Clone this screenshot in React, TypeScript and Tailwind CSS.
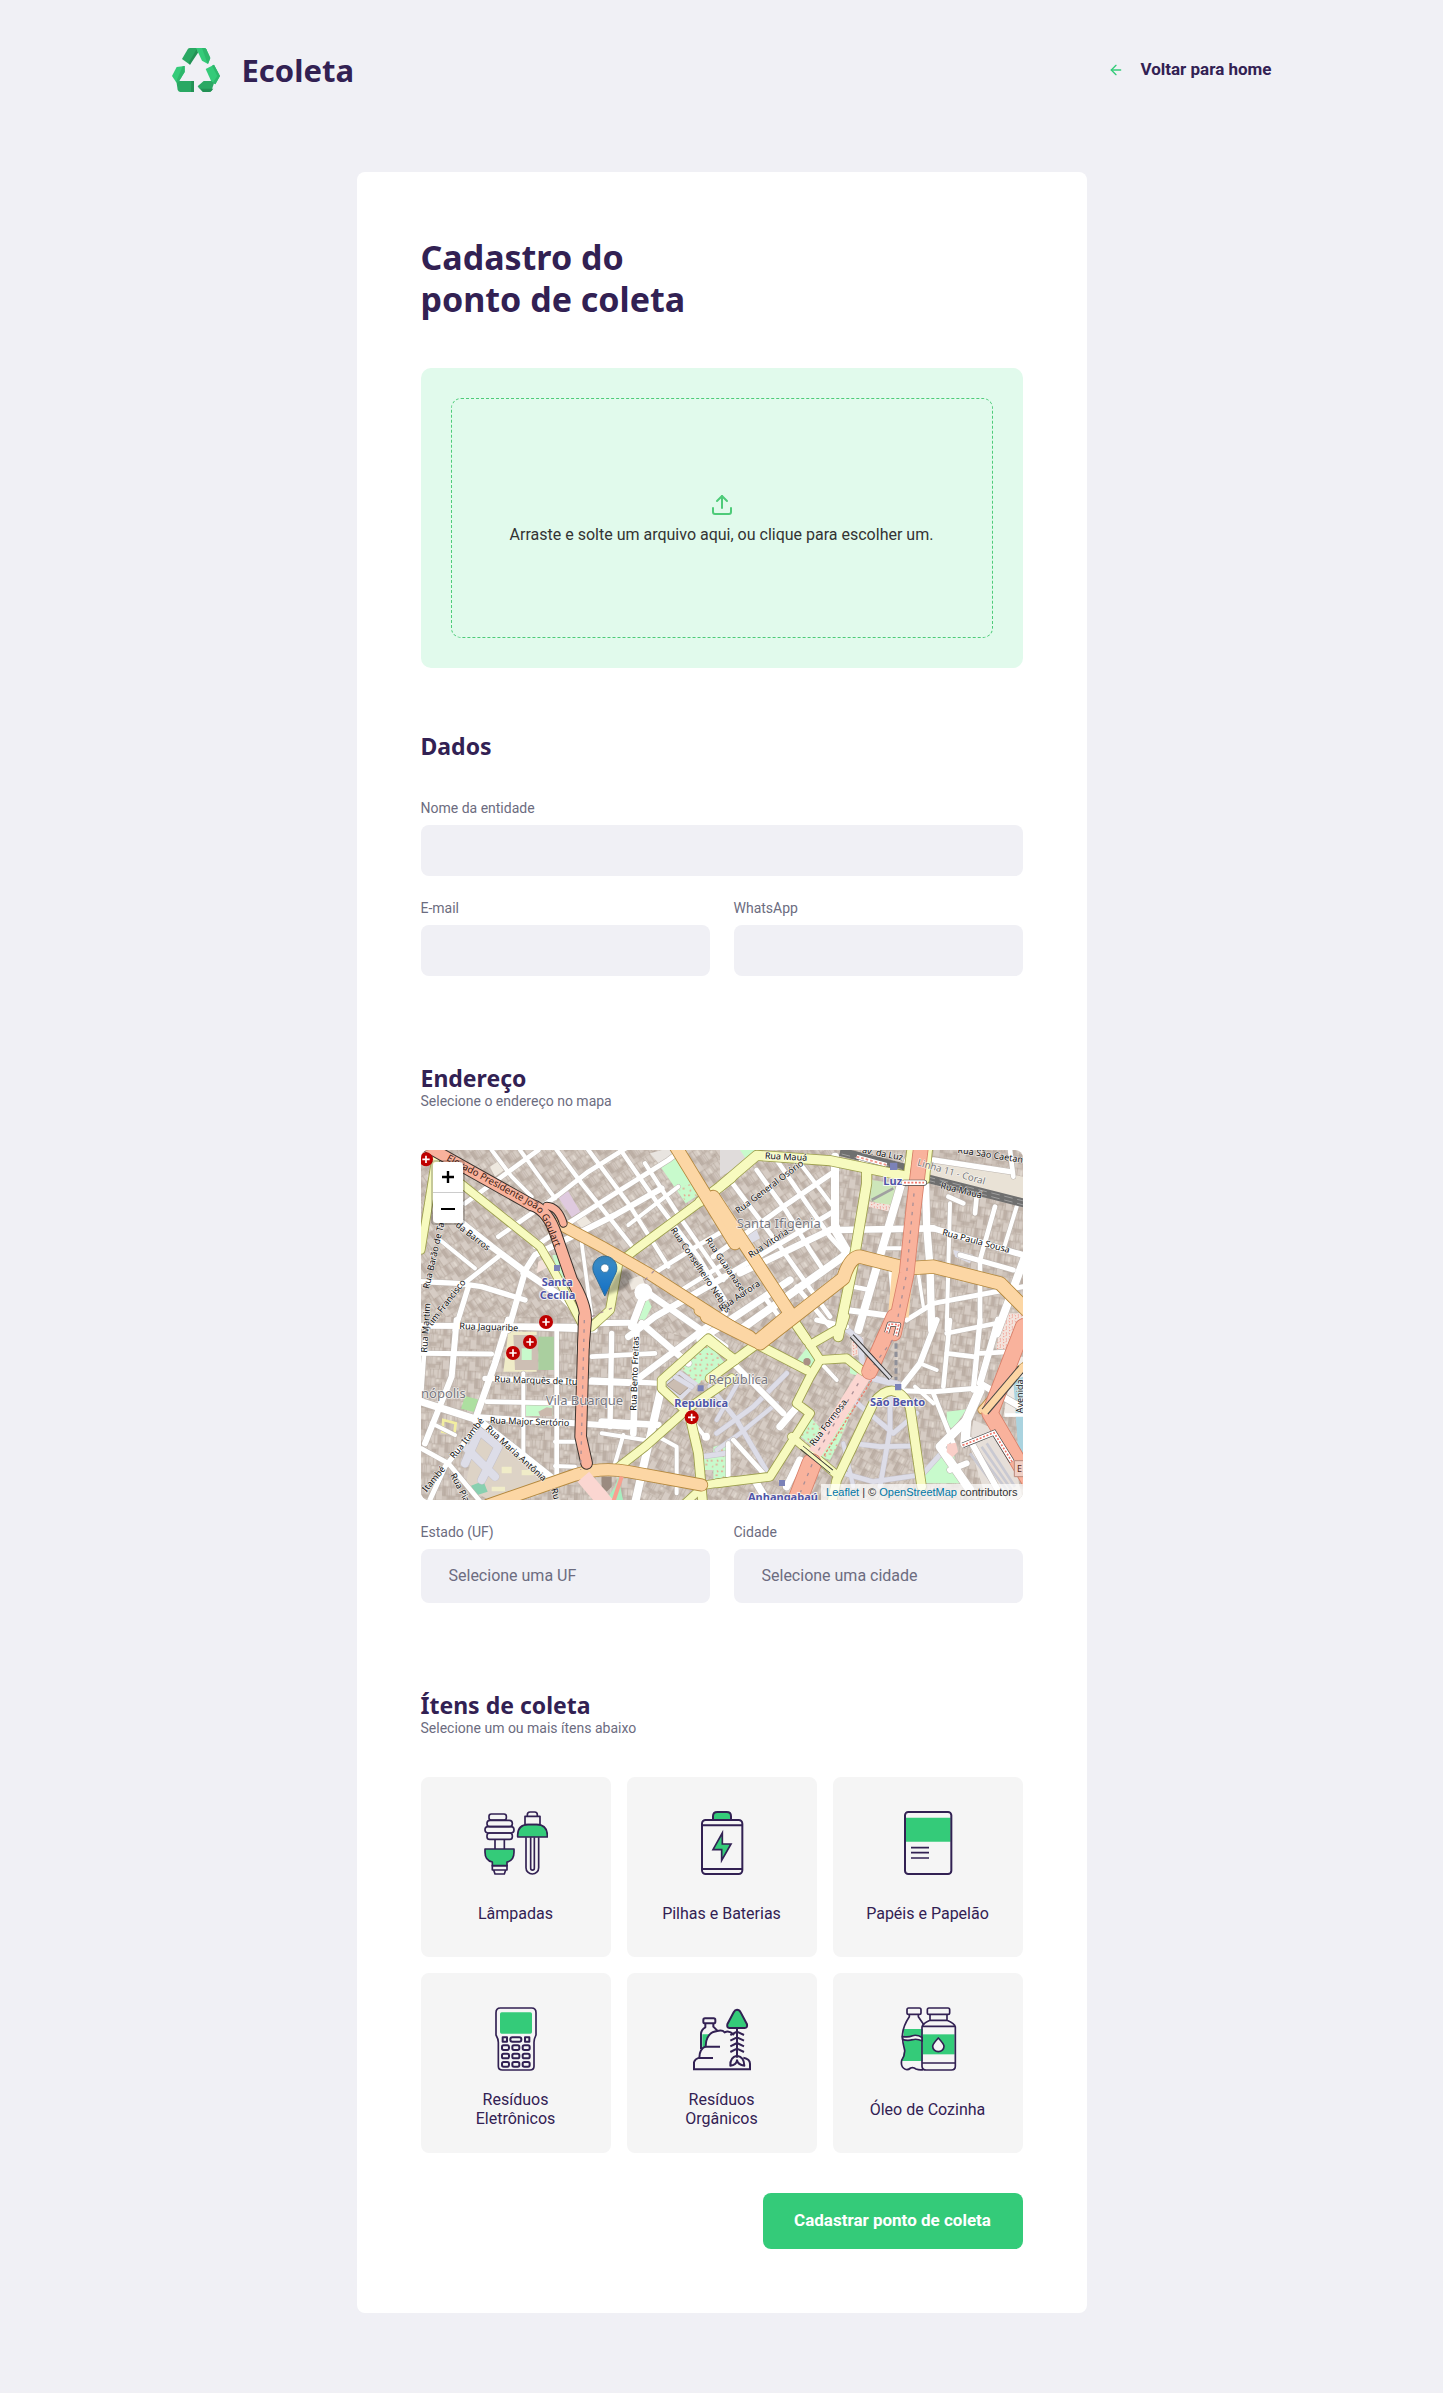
import { useState, type ReactNode } from "react";
import { FiArrowLeft, FiUpload } from "react-icons/fi";

const GREEN = "#34CB79";
const INK = "#322153";

/* ---------- Logo ---------- */

function Logo() {
  return (
    <a href="#" className="flex items-center gap-[22px]" aria-label="Ecoleta">
      <svg viewBox="0 0 144 132" className="h-11 w-12" aria-hidden="true">
        <path d="M30 33 48 2Q50 0 54 0H78L54 50Z" fill="#2AA863" />
        <path d="M54 50 78 14 76 0 50 44Z" fill="#239155" />
        <path d="M72 0H97Q101 0 103 4L115 30 108 48 90 38Z" fill={GREEN} />
        <path d="M90 0H97Q101 0 103 4L115 30 108 48 104 40Z" fill="#2EB76C" />
        <path d="M0 84 14 57 38 54 38 72 16 108Z" fill={GREEN} />
        <path d="M32 55 38 54 38 72 16 108 13 100Z" fill="#2EB76C" />
        <path d="M14 106 22 99H66V132H25Q20 132 17 126Z" fill="#2AA863" />
        <path d="M58 99H66V132H57Z" fill="#239155" />
        <path d="M77 115 95 99 128 99 119 127Q117 132 110 132H93Z" fill="#2AA863" />
        <path d="M77 115 82 122 124 122 119 128Q117 132 110 132H93Z" fill="#239155" />
        <path d="M101 63 126 50 144 84 130 109 117 98Z" fill={GREEN} />
        <path d="M120 53 126 50 144 84 130 109 122 104 136 84Z" fill="#2EB76C" />
      </svg>
      <span className="font-['Noto_Sans',sans-serif] text-[31px] leading-10 font-bold text-[#322153]">Ecoleta</span>
    </a>
  );
}

/* ---------- Map ---------- */

type Quadrant = 0 | 1 | 2 | 3;
type Road = [Quadrant, number, string];

const OFFSETS = ["translate(-18 -30)", "translate(897 -30)", "translate(-18 510)", "translate(897 510)"];

const whiteRoads: Road[] = [
  [0, 14, "M150 190 370 30"],
  [0, 14, "M250 290 430 165 520 95 640 20"],
  [0, 15, "M360 320 460 250 585 170 760 60 800 30"],
  [0, 18, "M325 400 360 345 600 225 740 145"],
  [0, 12, "M640 255 790 140"],
  [0, 12, "M230 30 290 110 350 170"],
  [0, 12, "M315 30 420 175"],
  [0, 13, "M425 30 500 130 585 235 660 330"],
  [0, 13, "M520 30 640 190 760 380"],
  [0, 13, "M610 20 735 200 850 350 930 480"],
  [0, 13, "M690 70 800 240 925 420"],
  [0, 20, "M130 240 230 320 330 395 440 470 500 530"],
  [0, 12, "M75 300 180 385"],
  [0, 14, "M250 350 135 440"],
  [0, 16, "M18 425 130 430 200 440 330 480"],
  [0, 18, "M330 395 280 570"],
  [0, 16, "M160 440 120 570"],
  [0, 18, "M18 557 480 560"],
  [0, 11, "M500 310 530 530"],
  [0, 18, "M530 550 640 548"],
  [0, 22, "M690 455 650 560"],
  [0, 20, "M700 460 930 620"],
  [0, 20, "M640 590 720 530 930 410"],
  [0, 14, "M700 410 860 310 930 270"],
  [0, 14, "M800 450 930 370"],
  [1, 14, "M30 120 180 320 330 530"],
  [1, 14, "M110 90 200 215 270 330 310 390"],
  [1, 14, "M170 60 260 190 330 290 380 345"],
  [1, 12, "M240 70 340 200"],
  [1, 16, "M-20 350 190 200 350 90"],
  [1, 16, "M-20 430 340 215"],
  [1, 20, "M60 400 350 260"],
  [1, 24, "M60 570 390 335"],
  [1, 22, "M-60 600 210 420"],
  [1, 24, "M345 50 345 270 380 330"],
  [1, 24, "M565 60 500 280 415 570"],
  [1, 20, "M350 270 640 265"],
  [1, 22, "M615 60 620 260 630 380 635 570"],
  [1, 18, "M640 265 909 345"],
  [1, 16, "M640 60 870 95"],
  [1, 12, "M690 190 680 570"],
  [1, 14, "M825 200 780 360 780 560"],
  [1, 12, "M890 200 850 330"],
  [1, 14, "M870 30 880 110"],
  [1, 15, "M909 440 640 490 560 540"],
  [1, 24, "M915 350 830 580"],
  [1, 15, "M720 345 880 390"],
  [1, 12, "M500 325 545 325"],
  [1, 14, "M400 440 450 450"],
  [1, 18, "M380 510 530 530"],
  [1, 10, "M595 400 610 500"],
  [1, 10, "M510 390 520 500"],
  [1, 14, "M230 440 330 560"],
  [1, 14, "M140 480 200 560"],
  [1, 14, "M770 170 765 220M685 170 730 190"],
  [2, 15, "M18 100 230 102"],
  [2, 18, "M125 0 110 170 30 370"],
  [2, 20, "M280 0 240 130 180 300"],
  [2, 22, "M18 245 190 300 430 490"],
  [2, 14, "M30 60 18 230"],
  [2, 16, "M260 20 540 30"],
  [2, 16, "M210 175 640 190"],
  [2, 14, "M215 245 480 250"],
  [2, 18, "M190 292 480 310 640 320"],
  [2, 12, "M325 160 325 400"],
  [2, 14, "M425 30 425 490"],
  [2, 12, "M420 365 480 365M420 438 480 440"],
  [2, 16, "M590 40 585 320"],
  [2, 20, "M665 20 655 340"],
  [2, 14, "M530 110 720 100"],
  [2, 16, "M530 180 740 190"],
  [2, 20, "M560 305 730 315"],
  [2, 12, "M560 340 690 360"],
  [2, 24, "M740 200 660 550"],
  [2, 12, "M625 345 600 430"],
  [2, 14, "M18 385 100 430 200 550"],
  [2, 15, "M195 310 90 440 40 550"],
  [2, 12, "M50 310 120 345"],
  [2, 20, "M680 10 820 130"],
  [2, 20, "M930 -20 670 175"],
  [2, 12, "M830 300 870 350"],
  [2, 12, "M720 345 785 380 785 520"],
  [3, 18, "M-30 60 190 280"],
  [3, 15, "M290 0 380 20"],
  [3, 12, "M290 115 350 180"],
  [3, 22, "M180 320 240 250"],
  [3, 14, "M40 360 130 460M25 370 25 470"],
  [3, 18, "M650 0 600 130 530 220"],
  [3, 14, "M690 0 670 200"],
  [3, 16, "M780 0 760 210"],
  [3, 20, "M835 0 780 190 900 260"],
  [3, 12, "M600 130 650 150"],
  [3, 14, "M680 40 830 10M680 100 760 110M780 100 880 95"],
  [3, 15, "M540 212 640 215 770 205"],
  [3, 12, "M585 200 640 250"],
  [3, 14, "M640 220 700 370"],
  [3, 28, "M780 210 740 300 735 370"],
  [3, 26, "M740 300 660 380 750 510"],
  [3, 18, "M690 450 740 430M750 360 850 540"],
  [3, 22, "M240 420 200 500M110 490 140 540"],
];

const footways: Road[] = [
  [3, 14, "M200 160 100 260-10 340"],
  [3, 14, "M-30 200 50 300 150 470"],
  [3, 12, "M70 160-10 300"],
  [3, 12, "M-10 390 60 340 170 250"],
  [3, 14, "M400 240 520 340 590 280"],
  [3, 14, "M400 370 480 380 580 378"],
  [3, 14, "M370 460 460 485 600 465"],
  [3, 14, "M510 210 510 330 480 500"],
  [3, 14, "M420 170 380 260 330 330"],
  [3, 16, "M370 20 420 60 430 160"],
  [3, 18, "M420 165 540 195"],
  [3, 14, "M610 460 690 370"],
  [3, 12, "M370 370 400 500"],
  [2, 14, "M780 170 830 200M860 410 930 400"],
  [2, 24, "M190 330 250 380 200 480M150 380 240 470M190 340 150 430"],
];

const yellowRoads: Road[] = [
  [0, 22, "M62 60 18 330"],
  [0, 22, "M100 100 375 320 410 380 500 550"],
  [0, 24, "M530 560 585 510 610 370 660 330 870 175 950 115"],
  [1, 28, "M-60 185 0 140 110 46 330 62 575 112"],
  [1, 28, "M440 90 440 130 400 370 355 590"],
  [1, 18, "M572 20 560 110M628 20 618 120"],
  [1, 26, "M205 520 260 600"],
  [2, 24, "M600 450 690 380 820 265 950 175"],
  [2, 24, "M810 270 740 205 740 180 880 55 930 95"],
  [2, 26, "M820 270 850 400 865 570"],
  [2, 22, "M810 550 870 495 950 483"],
  [3, 26, "M-30 175 110 72 260 150"],
  [3, 26, "M-30 65 45 120"],
  [3, 24, "M215-10 300 120 270 170 230 250 270 280 150 470-10 490"],
  [3, 24, "M375-10 365 20 270 75"],
  [3, 24, "M300 120 380 115 430 155"],
  [3, 22, "M215 350 345 460"],
  [3, 26, "M335 550 350 480 460 250Q520 170 570 260L605 500"],
];

const orangeRoads: Road[] = [
  [0, 32, "M430 250 560 320 700 400 950 560"],
  [0, 36, "M770 0 960 310"],
  [1, 36, "M-20 170 210 520"],
  [1, 38, "M120 610 370 415Q390 350 420 350L560 385 640 380 840 430 920 510"],
  [1, 34, "M-60 510 90 590"],
  [2, 34, "M220 555 480 465Q560 440 640 455L860 495"],
  [3, 36, "M-40-10 110 65 200-10"],
  [3, 20, "M785 270 870 170 925 130"],
];

const redRoads: Road[] = [
  [1, 42, "M603 20 580 210 560 400 522 580"],
  [3, 44, "M522-10 448 155"],
  [3, 56, "M275 430 225 560"],
  [3, 46, "M910 20 810 280 950 520"],
];

const elevated: Road[] = [
  [0, 20, "M395 198Q430 200 445 250"],
  [0, 32, "M20 10 350 195Q400 210 425 290L470 420Q512 490 512 540L505 620"],
  [2, 32, "M508-10 497 350 515 430"],
];

function Roads({ roads, fill, casing, edge = 5 }: { roads: Road[]; fill: string; casing: string; edge?: number }) {
  return (
    <g fill="none" strokeLinejoin="round" strokeLinecap="round">
      {roads.map(([q, w, d], i) => (
        <path key={`c${i}`} d={d} transform={OFFSETS[q]} stroke={casing} strokeWidth={w + edge} />
      ))}
      {roads.map(([q, w, d], i) => (
        <path key={`f${i}`} d={d} transform={OFFSETS[q]} stroke={fill} strokeWidth={w} />
      ))}
    </g>
  );
}

type Label = [Quadrant, number, number, number, string];

const streets: Label[] = [
  [0, 120, 258, 38, "da Barros"],
  [0, 42, 448, -77, "Rua Barão de Tatuí"],
  [0, 34, 580, -52, "artim Francisco"],
  [0, 133, 567, 2, "Rua Jaguaribe"],
  [0, 766, 270, 56, "Rua Conselheiro Nébias"],
  [0, 870, 300, 56, "Rua Guaianases"],
  [1, 134, 56, 3, "Rua Mauá"],
  [1, 425, 38, 11, "av. da Luz"],
  [1, 712, 38, 9, "Rua São Caetano"],
  [1, 55, 222, -37, "Rua General Osório"],
  [1, 92, 355, -33, "Rua Vitória"],
  [1, 4, 515, -34, "Rua Aurora"],
  [1, 660, 145, 14, "Rua Mauá"],
  [1, 665, 285, 15, "Rua Paula Sousa"],
  [2, 36, 98, -86, "Rua Martim"],
  [2, 238, 186, 2, "Rua Marquês de Itu"],
  [2, 224, 310, 2, "Rua Major Sertório"],
  [2, 210, 328, 42, "Rua Maria Antônia"],
  [2, 118, 418, -52, "Rua Itambé"],
  [2, 34, 518, -50, "Itambé"],
  [2, 105, 466, 62, "Rua Piauí"],
  [2, 408, 508, 74, "Rua"],
  [2, 664, 272, -88, "Rua Bento Freitas"],
  [3, 282, 380, -53, "Rua Formosa"],
  [3, 908, 280, -90, "Avenida"],
];

const places: Label[] = [
  [1, 50, 264, 0, "Santa Ifigênia"],
  [2, 18, 234, 0, "nópolis"],
  [2, 392, 256, 0, "Vila Buarque"],
  [2, 880, 192, 0, "República"],
];

const stations: Label[] = [
  [0, 380, 437, 0, "Santa"],
  [0, 374, 476, 0, "Cecília"],
  [1, 490, 135, 0, "Luz"],
  [2, 778, 260, 0, "República"],
  [3, 450, 258, 0, "São Bento"],
  [3, 84, 544, 0, "Anhangabaú"],
];

function Labels({ items, className }: { items: Label[]; className: string }) {
  return (
    <g className={className}>
      {items.map(([q, x, y, angle, text], i) => (
        <text
          key={i}
          transform={`${OFFSETS[q]} translate(${x} ${y}) rotate(${angle})`}
          className="[paint-order:stroke_fill] [stroke-linejoin:round]"
        >
          {text}
        </text>
      ))}
    </g>
  );
}

const hospitals = [
  [15, 28],
  [375, 516],
  [327, 576],
  [276, 609],
  [812, 802],
];

function Buildings({ id, angle }: { id: string; angle: number }) {
  return (
    <pattern
      id={id}
      width="92"
      height="76"
      patternUnits="userSpaceOnUse"
      patternTransform={`rotate(${angle}) scale(.86)`}
    >
      <rect width="92" height="76" fill="#cdc2b9" />
      <path fill="#d6ccc4" d="M0 0H20V30H0ZM34 6H58V24H34ZM62 34H88V58H62ZM22 44H44V74H22ZM74 0H92V20H74Z" />
      <path fill="#bfb2a8" d="M20 0H30V34H20ZM46 28H58V60H46ZM0 52H18V62H0ZM64 62H90V72H64Z" />
      <path fill="#e3dbd2" d="M58 8H64V28H58ZM4 34H12V44H4Z" />
      <path
        fill="none"
        stroke="#b3a69b"
        strokeWidth="2"
        d="M0 0H92M0 34H46M46 28H92M0 52H22M22 44V76M46 0V60M46 60H92M62 28V76M20 0V34M34 0V34M74 0V28M12 52V76M34 34V44M76 28V60M8 0V34M84 0V28M28 0V34M52 28V60M69 34V76"
      />
    </pattern>
  );
}

function StreetMap() {
  return (
    <svg
      viewBox="0 0 1806 1050"
      preserveAspectRatio="xMidYMid slice"
      className="block h-full w-full"
      role="img"
      aria-label="Mapa do centro de São Paulo"
    >
      <defs>
        <Buildings id="blocks-nw" angle={-34} />
        <Buildings id="blocks-sw" angle={3} />
        <Buildings id="blocks-ne" angle={8} />
        <Buildings id="blocks-se" angle={28} />
        <pattern id="trees" width="34" height="32" patternUnits="userSpaceOnUse">
          <rect width="34" height="32" fill="#c8facc" />
          <path d="M3 6h6M21 18h6M8 26l4-4M25 4l4 4" stroke="#f08c7d" strokeWidth="3.500" />
        </pattern>
        <pattern id="market" width="18" height="18" patternUnits="userSpaceOnUse">
          <rect width="18" height="18" fill="#f3e3dc" />
          <path d="M2 3l4 4M11 11l4-3M13 1v4M3 14h4" stroke="#f2968a" strokeWidth="3" />
        </pattern>
        <linearGradient id="pin" x1="0" y1="0" x2="0" y2="1">
          <stop offset="0" stopColor="#3883b7" />
          <stop offset=".2" stopColor="#3689c6" />
          <stop offset="1" stopColor="#126fc6" />
        </linearGradient>
        <filter id="pin-shadow">
          <feGaussianBlur stdDeviation="5" />
        </filter>
        <path id="elevado" d="M75 30 340 175Q368 200 380 240L425 345" />
      </defs>

      <rect width="1806" height="1050" fill="url(#blocks-ne)" />
      <path d="M0 0H1240V320L900 590 640 520 0 500Z" fill="url(#blocks-nw)" />
      <path d="M0 500H640L800 700 640 1050H0Z" fill="url(#blocks-sw)" />
      <path d="M720 700 1100 450 1420 520 1480 1050H640Z" fill="url(#blocks-se)" />

      <g transform={OFFSETS[0]}>
        <path d="M733 75 775 45 850 165 812 190Z" fill="#c8facc" />
        <path d="M790 145 832 130 848 165 812 188Z" fill="url(#trees)" />
        <path d="M427 168 456 148 496 215 470 232Z" fill="#dfcadf" />
        <path d="M412 345H442L470 460 430 400Z" fill="#c8facc" />
        <path d="M370 365 400 350 410 375 365 400Z" fill="#f3e3dc" />
        <path d="M225 80 255 60 275 85 240 110ZM480 240 500 215 530 250 500 265Z" fill="#eee8df" />
        <path d="M665 500 700 480 710 500 690 540H665Z" fill="#c8facc" />
        <path d="M705 40 760 25 775 45 735 75Z" fill="#e8e4e0" />
        <path d="M640 420 680 405 690 435 650 450Z" fill="#eee8df" />
      </g>
      <g transform={OFFSETS[1]}>
        <path d="M0 30H90L60 80 0 110Z" fill="#e0dcdb" />
        <path d="M60 30H110L80 60Z" fill="#c8facc" />
        <path d="M455 120 520 130 540 190 500 200 450 180Z" fill="#cde6ba" />
        <path d="M450 185 515 195 510 215 445 200Z" fill="url(#market)" />
        <path d="M520 145 455 180" stroke="#a0a0a0" strokeWidth="8" />
        <path d="M640 60 909 110V190L620 100Z" fill="#e9e2d6" />
        <path d="M850 520H909V570H840Z" fill="url(#market)" />
        <path d="M70 290 110 270 120 295 85 315ZM700 330 760 345 750 370 705 350Z" fill="#dddde8" />
        <path d="M370 345 395 335 400 360Z" fill="#c8facc" />
        <circle cx="358" cy="368" r="20" fill="#cfc2b8" stroke="#a99b90" strokeWidth="3" />
      </g>
      <g transform={OFFSETS[2]}>
        <path d="M280 35H365V155H265Z" fill="#f0ecc8" />
        <path d="M295 45H368V150H300Z" fill="#cdbfb4" />
        <path d="M320 85H350V120H320Z" fill="#c8facc" />
        <path d="M370 50H418V150H370Z" fill="#aacf9f" />
        <path d="M332 253H412V288H332Z" fill="#c8facc" />
        <path d="M370 275 395 262 412 265V288H375Z" fill="#cbb9ad" />
        <path d="M150 228 196 240 192 280 138 266Z" fill="#addfa0" />
        <path d="M85 300 122 310 118 342 82 335Z" fill="none" stroke="#f2eea0" strokeWidth="8" />
        <path d="M190 320 300 400 400 490 240 550 150 500Z" fill="#ddd3c6" />
        <path d="M260 440h30v20h-30zM300 400h30v14h-30zM230 500h40v14h-40zM320 450h36v16h-36z" fill="#f0ecc8" />
        <path d="M168 497 205 483 218 515 180 527Z" fill="#88d0b0" />
        <path d="M780 130 880 68 930 130 850 192Z" fill="url(#trees)" />
        <path d="M745 190 790 148 850 190 800 240Z" fill="#dddde8" />
        <path d="M755 195 792 165 828 195 795 225Z" fill="#cbbdb2" stroke="#a99b90" strokeWidth="3" />
        <path d="M570 545 600 500 610 470 625 545Z" fill="#a8eec0" />
        <path d="M560 470H590V500L575 515 560 500Z" fill="#9b8b80" />
        <path d="M860 420Q900 390 930 400V450H865Z" fill="url(#trees)" />
      </g>
      <g transform={OFFSETS[3]}>
        <path d="M228 125 262 82 290 122 262 155Z" fill="#c8facc" />
        <path d="M230 340 270 290 315 340 285 385Z" fill="url(#trees)" />
        <path d="M390 110 430 130 420 170 390 160Z" fill="#c8facc" />
        <path d="M400 260 360 360 330 420 300 410 350 320Z" fill="url(#trees)" />
        <path d="M395 60 430 50V100L395 110Z" fill="url(#market)" />
        <path d="M680 275 740 268 700 325 680 320Z" fill="#c8facc" />
        <path d="M690 350 720 490H600L615 450Z" fill="#c8facc" />
        <path d="M840 0H900V80L830 90Z" fill="url(#market)" />
        <path d="M880 110H909V290H850Z" fill="#f0ebe6" />
        <path d="M760 300 830 330 880 420 909 540H800L750 380Z" fill="#e6dfd9" />
        <path d="M770 390 860 510M785 380 875 510M800 370 885 500M750 400 840 520" stroke="#c9c9d2" strokeWidth="8" />
        <path d="M880 180 909 170V440L895 400Z" fill="#aad3df" />
        <path d="M-20 380 25 370V470L-20 480Z" fill="url(#trees)" />
      </g>

      <Roads roads={footways} fill="#dddde8" casing="#c4c0c8" edge={3} />
      <Roads roads={whiteRoads} fill="#ffffff" casing="#bdb6b0" edge={3} />
      <g transform={OFFSETS[0]} fill="#fff">
        <circle cx="685" cy="457" r="27" />
      </g>
      <g transform={OFFSETS[2]} fill="#fff">
        <circle cx="873" cy="350" r="12" />
      </g>
      <path d="M682 372 708 368 714 395 698 412 680 396Z" transform={OFFSETS[3]} fill="#f9cfc8" />

      <g transform={OFFSETS[1]} fill="none">
        <path d="M360 35 560 85M620 115 915 190" stroke="#6f6f6f" strokeWidth="26" />
        <path d="M365 42 560 92M620 110 915 184M620 120 915 196" stroke="#b5b5b5" strokeWidth="2" strokeDasharray="26 14" />
        <path d="M410 50 500 75M415 65 500 90" stroke="#fff" strokeWidth="12" />
        <path d="M410 50 500 75M415 65 500 90" stroke="#f2968a" strokeWidth="5" strokeDasharray="8 6" />
      </g>

      <Roads roads={yellowRoads} fill="#f7fabf" casing="#9d9f4e" />
      <Roads roads={orangeRoads} fill="#fcd6a4" casing="#b4883d" />

      <g fill="none" strokeLinecap="butt">
        <g transform={OFFSETS[3]}>
          <path d="M430 170 285 400" stroke="#fbd6d1" strokeWidth="42" />
          <path d="M455 180 310 410" stroke="#ee7d6c" strokeWidth="4" strokeDasharray="8 5" />
        </g>
        <g transform={OFFSETS[2]}>
          <path d="M505 470 590 570" stroke="#fbd6d1" strokeWidth="46" />
          <path d="M620 470 595 545" stroke="#f9a08f" strokeWidth="12" />
        </g>
        <path d="M548 380 535 530" transform={OFFSETS[1]} stroke="#fcd6a4" strokeWidth="62" />
      </g>

      <Roads roads={redRoads} fill="#f9b29c" casing="#d9806a" />
      <Roads roads={elevated} fill="#f9b29c" casing="#3b332e" edge={6} />

      <g fill="none" stroke="#a98f96" strokeWidth="4" strokeDasharray="10 18">
        <path d="M582 160 560 400 530 550" transform={OFFSETS[1]} />
        <path d="M518 60 450 150M415 190 290 400 240 520" transform={OFFSETS[3]} />
        <path d="M508 0 497 450" transform={OFFSETS[2]} />
        <path d="M690 420 730 380M530 530 600 500" transform={OFFSETS[0]} />
      </g>

      <g transform={OFFSETS[3]} fill="none">
        <path d="M395 48 512 175M245 383 335 455" stroke="#333" strokeWidth="15" />
        <path d="M395 48 512 175" stroke="#d8d8de" strokeWidth="9" />
        <path d="M240 378 340 460" stroke="#f7fabf" strokeWidth="10" />
        <g strokeLinejoin="round">
          <path d="M500 38 508 12 536 14 527 48" stroke="#444" strokeWidth="15" />
          <path d="M500 38 508 12 536 14 527 48" stroke="#fff" strokeWidth="11" />
          <path d="M500 38 508 12 536 14 527 48" stroke="#f2776a" strokeWidth="5" strokeDasharray="6 5" />
        </g>
        <path d="M528 70V180" stroke="#8f9099" strokeWidth="9" strokeDasharray="16 9" />
        <path d="M728 376 822 338 876 425" stroke="#444" strokeWidth="17" />
        <path d="M728 376 822 338 876 425" stroke="#fff" strokeWidth="13" />
        <path d="M728 376 822 338 876 425" stroke="#f2776a" strokeWidth="5" strokeDasharray="6 5" />
        <path d="M795 275 905 145" stroke="#444" strokeWidth="26" />
        <path d="M790 280 912 137" stroke="#fcd6a4" strokeWidth="20" />
        <path d="M855 285H909" stroke="#fff" strokeWidth="10" />
        <circle cx="261" cy="125" r="11" fill="#a98f84" />
      </g>
      <g transform={OFFSETS[1]} fill="none">
        <path d="M552 128H612" stroke="#444" strokeWidth="18" strokeLinecap="round" />
        <path d="M552 128H612" stroke="#fff" strokeWidth="14" strokeLinecap="round" />
        <path d="M552 128H612" stroke="#f2776a" strokeWidth="5" strokeDasharray="6 5" />
      </g>

      <g fill="#7b82b8">
        <path d="M399 345h18v18h-18zM1407 38h22v22h-22zM830 706h18v18h-18zM1422 702h19v19h-19zM1074 990h18v18h-18z" />
      </g>

      <Labels
        items={places}
        className="fill-[#77777f] stroke-white/70 stroke-[5px] font-['Noto_Sans',sans-serif] text-[39px]"
      />
      <Labels
        items={[[1, 590, 76, 16, "Linha 11 - Coral"]]}
        className="fill-[#777777] stroke-white/70 stroke-[4px] font-['Noto_Sans',sans-serif] text-[29px]"
      />
      <Labels
        items={streets}
        className="fill-[#111111] stroke-white/70 stroke-[4px] font-['Noto_Sans',sans-serif] text-[27px]"
      />
      <text className="fill-[#3a1a12] font-['Noto_Sans',sans-serif] text-[29px]">
        <textPath href="#elevado">Elevado Presidente João Goulart</textPath>
      </text>
      <Labels
        items={stations}
        className="fill-[#4f55a8] stroke-white/80 stroke-[6px] font-['Noto_Sans',sans-serif] text-[33px] font-bold"
      />

      <g>
        <path d="M1780 932h40v48h-40z" fill="#f0cfc5" stroke="#b98a7b" strokeWidth="3" />
        <text x="1788" y="966" className="fill-[#5a2a1a] font-['Noto_Sans',sans-serif] text-[27px]">
          E
        </text>
      </g>

      {hospitals.map(([x, y]) => (
        <g key={`${x}-${y}`} transform={`translate(${x} ${y})`}>
          <circle r="21" fill="#bf0000" />
          <path d="M0-11V11M-11 0H11" stroke="#fff" strokeWidth="5" />
        </g>
      ))}

      <path d="M550 437 585 375Q610 350 632 370 640 390 610 415Z" fill="#000" opacity=".3" filter="url(#pin-shadow)" />
      <g transform="translate(514 317) scale(3)">
        <path
          d="M12.5.5C5.9.5.5 5.9.5 12.5c0 2.8 1.1 5.2 2.4 7.7L12.5 40.4l9.6-20.2c1.3-2.5 2.4-4.9 2.4-7.7C24.5 5.9 19.1.5 12.5.5Z"
          fill="url(#pin)"
          stroke="#2e6c97"
          strokeWidth="1"
        />
        <circle cx="12.5" cy="12.5" r="4.2" fill="#fff" stroke="#2e6c97" strokeWidth=".8" />
      </g>
    </svg>
  );
}

function MapPanel() {
  return (
    <div className="relative mb-6 h-[350px] overflow-hidden rounded-lg">
      <StreetMap />
      <div className="absolute top-2.5 left-2.5 flex flex-col rounded border-2 border-black/20 bg-clip-padding">
        <button
          type="button"
          aria-label="Aproximar"
          className="flex h-[31px] w-[30px] items-center justify-center rounded-t-sm border-b border-[#cccccc] bg-white text-black"
        >
          <svg viewBox="0 0 14 14" className="size-3.5" aria-hidden="true">
            <path d="M7 1V13M1 7H13" stroke="currentColor" strokeWidth="2.4" />
          </svg>
        </button>
        <button
          type="button"
          aria-label="Afastar"
          className="flex h-[30px] w-[30px] items-center justify-center rounded-b-sm bg-white text-black"
        >
          <svg viewBox="0 0 14 14" className="size-3.5" aria-hidden="true">
            <path d="M0 8H14" stroke="currentColor" strokeWidth="2" />
          </svg>
        </button>
      </div>
      <div className="absolute right-0 bottom-0 bg-white/70 px-[5px] font-['Liberation_Sans',Arial,sans-serif] text-[11px] leading-4 text-[#333333]">
        <a href="#" className="text-[#0078a8]">
          Leaflet
        </a>{" "}
        | ©{" "}
        <a href="#" className="text-[#0078a8]">
          OpenStreetMap
        </a>{" "}
        contributors
      </div>
    </div>
  );
}

/* ---------- Item icons ---------- */

function Icon({ children }: { children: ReactNode }) {
  return (
    <svg
      viewBox="0 0 192 192"
      className="size-16 shrink-0"
      fill="none"
      stroke={INK}
      strokeWidth="6"
      strokeLinejoin="round"
      aria-hidden="true"
    >
      {children}
    </svg>
  );
}

const lampIcon = (
  <Icon>
    <g strokeWidth="5">
      <rect x="15" y="9" width="52" height="18" rx="7" />
      <rect x="9" y="28" width="76" height="19" rx="9" />
      <rect x="3" y="47" width="87" height="19" rx="9" />
      <rect x="9" y="66" width="76" height="19" rx="8" />
      <path d="M33 85V114M61 85V114M25 164H69V177H25ZM29 177 33 189H61L65 177" />
      <path d="M3 114H90V124Q90 149 69 153V164H25V153Q3 149 3 124Z" fill={GREEN} />
      <path d="M130 16V11Q130 3 138 3H152Q160 3 160 11V16ZM123 16H168V41H123Z" />
      <path d="M126 79V170a19 19 0 0 0 38 0V79M140 79V172a5.500 5.500 0 0 0 11 0V79" />
      <path d="M101 78V72Q102 41 132 41H158Q189 41 190 72V78Z" fill={GREEN} />
    </g>
  </Icon>
);

const batteryIcon = (
  <Icon>
    <path d="M69 27V16Q69 3 82 3H110Q123 3 123 16V27" fill={GREEN} />
    <rect x="36" y="27" width="121" height="162" rx="11" />
    <path d="M36 43H157M36 174H157" />
    <path d="M97 66 69 116H95V148L123 99H97Z" fill={GREEN} strokeLinejoin="miter" strokeWidth="5" />
  </Icon>
);

const paperIcon = (
  <Icon>
    <path d="M28 20H164V92H28Z" fill={GREEN} stroke="none" />
    <rect x="27" y="3" width="139" height="186" rx="10" />
    <path d="M45 110H99M45 125H99M45 141H99" strokeWidth="5" />
  </Icon>
);

const electronicsIcon = (
  <Icon>
    <path
      d="M49 3H143Q156 3 156 17V84Q150 96 150 106V178Q150 189 138 189H55Q43 189 43 178V106Q43 96 36 84V17Q36 3 49 3Z"
      strokeWidth="5"
    />
    <rect x="48" y="16" width="96" height="64" rx="5" fill={GREEN} stroke="none" />
    <rect x="56" y="91" width="13" height="13" />
    <rect x="79" y="91" width="33" height="13" rx="6" />
    <rect x="123" y="91" width="13" height="13" />
    {[115, 140, 165].map((y) =>
      [54, 85, 116].map((x) => <rect key={`${x}-${y}`} x={x} y={y} width="21" height="14" rx="5" />),
    )}
  </Icon>
);

const organicIcon = (
  <Icon>
    <path d="M37 82H58L50 96 47 118 37 126Z" fill={GREEN} stroke="none" />
    <g>
      <rect x="40" y="34" width="36" height="15" rx="5" />
      <path d="M46 49V61Q33 68 33 82V126M70 49V59L82 71" />
      <path
        d="M160 152Q180 156 180 170V187H12V166Q15 156 28 152Q28 126 47 118Q48 76 82 72Q97 68 104 76Q118 68 132 84"
        strokeLinejoin="miter"
      />
      <path d="M45 119H90M26 153H69" />
      <path d="M141 63V152M121 84 141 74 162 84M121 101 141 91 162 101M121 118 141 108 162 118M121 135 141 125 162 135" />
      <path d="M141 146Q120 150 121 176Q139 174 141 160Q144 174 163 176Q163 150 141 146Z" />
      <path d="M141 8Q148 8 152 16L171 52Q173 62 164 63H118Q110 62 112 52L131 16Q135 8 141 8Z" fill={GREEN} />
    </g>
  </Icon>
);

const oilIcon = (
  <Icon>
    <path d="M22 66H80V162H17L25 130Z" fill={GREEN} stroke="none" />
    <path d="M19 88Q36 92 50 86 62 82 80 92V102Q62 94 50 98 36 102 20 98Z" fill="#f5f5f5" strokeWidth="5" />
    <g strokeWidth="5">
      <rect x="33" y="3" width="42" height="19" rx="5" />
      <path d="M40 22V29Q20 58 19 88 20 108 26 130 27 145 17 160 13 180 28 187 36 190 44 183 52 180 60 186 70 190 82 188M67 22V29L84 54" />
      <path d="M81 82H176V142H81Z" fill={GREEN} stroke="none" />
      <rect x="94" y="3" width="67" height="19" rx="5" />
      <path d="M102 22V40Q80 49 78 60V178Q79 189 91 189H166Q178 189 178 178V60Q176 49 153 40V22M102 40H153M79 58H177M78 168H178" />
      <path d="M127 93Q144 111 144 118A17 16 0 0 1 110 118Q110 111 127 93Z" fill="#f5f5f5" />
    </g>
  </Icon>
);

const items = [
  { title: "Lâmpadas", icon: lampIcon },
  { title: "Pilhas e Baterias", icon: batteryIcon },
  { title: "Papéis e Papelão", icon: paperIcon },
  { title: "Resíduos Eletrônicos", icon: electronicsIcon },
  { title: "Resíduos Orgânicos", icon: organicIcon },
  { title: "Óleo de Cozinha", icon: oilIcon },
];

/* ---------- Form parts ---------- */

function Section({ title, hint, children }: { title: string; hint?: string; children: ReactNode }) {
  return (
    <fieldset className="mt-16 min-w-0">
      <legend className="mb-10 w-full">
        <h2 className="font-['Noto_Sans',sans-serif] text-[23px] leading-7 font-bold">{title}</h2>
        {hint && <span className="block text-sm leading-[18px] text-[#6c6c80]">{hint}</span>}
      </legend>
      {children}
    </fieldset>
  );
}

function Field({ id, label, children }: { id: string; label: string; children: ReactNode }) {
  return (
    <div className="mb-6 flex min-w-0 flex-1 flex-col">
      <label htmlFor={id} className="mb-2 text-sm leading-[17px] text-[#6c6c80]">
        {label}
      </label>
      {children}
    </div>
  );
}

const inputClass = "h-[51px] w-full rounded-lg bg-[#f0f0f5] px-6 text-base text-[#6c6c80]";
const selectClass = "h-[54px] w-full appearance-none rounded-lg bg-[#f0f0f5] px-7 text-base text-[#6c6c80]";

export default function App() {
  const [selected, setSelected] = useState<string[]>([]);

  const toggle = (title: string) =>
    setSelected((current) => (current.includes(title) ? current.filter((t) => t !== title) : [...current, title]));

  return (
    <div className="min-h-screen bg-[#f0f0f5] font-[Roboto,sans-serif] text-[#322153] antialiased">
      <div className="mx-auto flow-root max-w-[1100px]">
        <header className="mt-12 flex h-11 items-center justify-between">
          <Logo />
          <a href="#" className="flex items-center gap-4 text-[17px] font-bold">
            <FiArrowLeft size={16} className="text-[#34cb79]" />
            Voltar para home
          </a>
        </header>

        <form className="mx-auto my-20 flex max-w-[730px] flex-col rounded-lg bg-white p-16" onSubmit={(e) => e.preventDefault()}>
          <h1 className="font-['Noto_Sans',sans-serif] text-[34px] leading-[42px] font-bold">
            Cadastro do
            <br />
            ponto de coleta
          </h1>

          <label className="mt-12 flex h-[300px] cursor-pointer rounded-[10px] bg-[#e1faec] p-[30px]">
            <input type="file" accept="image/*" className="sr-only" />
            <span className="flex flex-1 flex-col items-center justify-center gap-2 rounded-[10px] border border-dashed border-[#4ecb79] text-center leading-[19px] text-[#333333]">
              <FiUpload size={24} className="text-[#4ecb79]" />
              Arraste e solte um arquivo aqui, ou clique para escolher um.
            </span>
          </label>

          <Section title="Dados">
            <Field id="name" label="Nome da entidade">
              <input id="name" type="text" className={inputClass} />
            </Field>
            <div className="flex gap-6">
              <Field id="email" label="E-mail">
                <input id="email" type="email" className={inputClass} />
              </Field>
              <Field id="whatsapp" label="WhatsApp">
                <input id="whatsapp" type="text" className={inputClass} />
              </Field>
            </div>
          </Section>

          <Section title="Endereço" hint="Selecione o endereço no mapa">
            <MapPanel />
            <div className="flex gap-6">
              <Field id="uf" label="Estado (UF)">
                <select id="uf" className={selectClass}>
                  <option>Selecione uma UF</option>
                </select>
              </Field>
              <Field id="city" label="Cidade">
                <select id="city" className={selectClass}>
                  <option>Selecione uma cidade</option>
                </select>
              </Field>
            </div>
          </Section>

          <Section title="Ítens de coleta" hint="Selecione um ou mais ítens abaixo">
            <ul className="grid grid-cols-3 gap-4">
              {items.map(({ title, icon }) => (
                <li key={title}>
                  <button
                    type="button"
                    aria-pressed={selected.includes(title)}
                    onClick={() => toggle(title)}
                    className="flex h-[180px] w-full cursor-pointer flex-col items-center rounded-lg border-2 border-[#f5f5f5] bg-[#f5f5f5] px-6 pt-8 pb-4 text-center aria-pressed:border-[#34cb79] aria-pressed:bg-[#e1faec]"
                  >
                    {icon}
                    <span className="mt-3 flex flex-1 items-center leading-[19px]">{title}</span>
                  </button>
                </li>
              ))}
            </ul>
          </Section>

          <button
            type="submit"
            className="mt-10 h-14 w-[260px] cursor-pointer self-end rounded-lg bg-[#34cb79] text-[17px] font-bold text-white"
          >
            Cadastrar ponto de coleta
          </button>
        </form>
      </div>
    </div>
  );
}
